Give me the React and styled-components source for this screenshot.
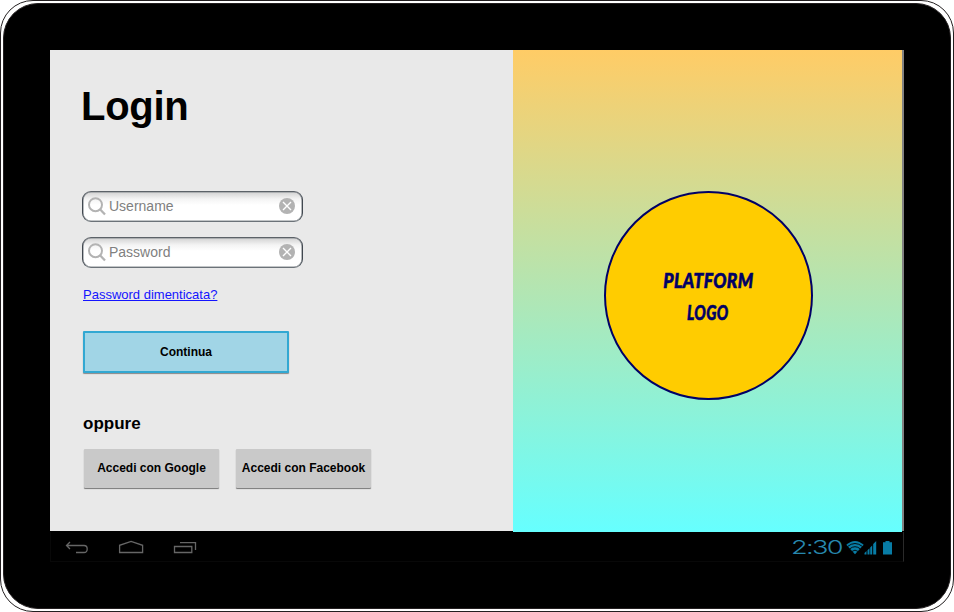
import React from "react";
import styled, { createGlobalStyle } from "styled-components";

const GlobalStyle = createGlobalStyle`
  body { margin: 0; background: #fff; overflow: hidden; font-family: "Liberation Sans", Arial, sans-serif; }
  *, *::before, *::after { box-sizing: border-box; }
`;

const Tablet = styled.div`
  width: 954px;
  height: 612px;
  padding: 2px;
  border: 1px solid #231f20;
  border-radius: 33px;
  background: #fff;
`;

const Bezel = styled.div`
  height: 606px;
  padding: 46px;
  border: 1px solid #231f20;
  border-radius: 35px;
  background: #000;
`;

const Screen = styled.main`
  display: grid;
  grid-template-columns: 463px 389px 2px;
  height: 482px;
`;

const LoginPanel = styled.form`
  height: 481px;
  padding: 33px 0 0 33px;
  background: #e9e9e9;
`;

const Title = styled.h1`
  margin: 0 0 62px -2px;
  font-size: 40px;
  line-height: 46px;
  height: 46px;
  letter-spacing: -0.3px;
`;

const Fields = styled.div`
  display: flex;
  flex-direction: column;
  gap: 15px;
  margin-left: -1px;
`;

const Field = styled.label`
  display: flex;
  align-items: center;
  width: 221px;
  height: 31px;
  padding: 0 7px 1px 5px;
  border: 1px solid;
  border-color: #5c6268 #414850 #6b7278;
  border-radius: 9px;
  background: linear-gradient(#d2d2d2, #f4f4f4 7px, #fff 13px);
  box-shadow: inset 0 0 0 0.6px #868b90;
`;

const FieldText = styled.span`
  flex: 1;
  margin-left: 3px;
  font-size: 14px;
  line-height: 16px;
  color: #808080;
`;

const ForgotLink = styled.a`
  display: block;
  width: max-content;
  margin-top: 19px;
  font-size: 13px;
  line-height: 16px;
  color: #1414ff;
  text-decoration: underline;
`;

const Button = styled.button`
  display: block;
  width: ${(p) => (p.$primary ? 206 : 135)}px;
  height: ${(p) => (p.$primary ? 42 : 39)}px;
  margin: ${(p) => (p.$primary ? "28px 0 0" : "0")};
  padding: ${(p) => (p.$primary ? "0" : "0 0 1px")};
  border: ${(p) => (p.$primary ? "2px solid #32a8d2" : "0")};
  border-radius: 1px;
  background: ${(p) => (p.$primary ? "#a1d5e6" : "#c9c9c9")};
  box-shadow: ${(p) => (p.$primary ? "0 1px 1px #888" : "0 1px 1px #777")};
  font: bold 12px/14px "Liberation Sans", Arial, sans-serif;
  color: #000;
  white-space: nowrap;
`;

const Alternative = styled.h2`
  margin: 41px 0 0;
  font-size: 17px;
  line-height: 20px;
`;

const SocialRow = styled.div`
  display: flex;
  gap: 17px;
  margin: 15px 0 0 1px;
`;

const BrandPanel = styled.section`
  display: flex;
  justify-content: center;
  padding: 141px 0 0 1px;
  height: 482px;
  background: linear-gradient(#ffcc66, #66ffff);
`;

const LogoDisc = styled.div`
  display: flex;
  flex-direction: column;
  align-items: center;
  justify-content: center;
  width: 209px;
  height: 209px;
  border: 2px solid #000066;
  border-radius: 50%;
  background: #ffcc00;
`;

const LogoLine = styled.span`
  display: block;
  font: italic 900 21px/32px Lato, sans-serif;
  letter-spacing: 0.5px;
  color: #000066;
  -webkit-text-stroke: 0.6px #000066;
  transform: scaleX(${(p) => p.$stretch});
`;

const ScreenEdge = styled.div`
  height: 481px;
  background: #828282;
`;

const NavBar = styled.footer`
  display: flex;
  justify-content: space-between;
  width: 854px;
  height: 30px;
  border: 1px solid #080808;
  border-top: 0;
  border-right-color: #2a2a2a;
`;

const NavIcons = styled.nav`
  display: flex;
  gap: 28px;
  padding: 8px 0 0 13px;
`;

const Status = styled.div`
  display: flex;
  padding-right: 9px;
`;

const Clock = styled.time`
  width: 50px;
  margin-right: 5px;
  font: 300 19px/31px Inter, sans-serif;
  letter-spacing: -1.2px;
  color: #2787ad;
  white-space: nowrap;
  transform: scaleX(1.43);
  transform-origin: left center;
`;

const SearchIcon = () => (
  <svg width="18" height="19" viewBox="0 0 18 19" fill="none" stroke="#b3b3b3" strokeWidth="2">
    <circle cx="7.5" cy="7.7" r="6.5" />
    <path d="M12 12.3 17 17.5" strokeWidth="2.3" />
  </svg>
);

const ClearIcon = () => (
  <svg width="16" height="16" viewBox="0 0 16 16">
    <circle cx="8" cy="8" r="8" fill="#b3b3b3" />
    <path d="m4 4 8 8m0-8-8 8" stroke="#fff" strokeWidth="1.4" />
  </svg>
);

const BackIcon = () => (
  <svg width="26" height="16" viewBox="0 0 26 16" fill="none" stroke="#666" strokeWidth="1.3">
    <path d="M6 2 2.5 5.5 6 9M2.5 5.5H20q3.2 0 3.2 3.5T20 12.5h-8" />
  </svg>
);

const HomeIcon = () => (
  <svg width="26" height="16" viewBox="0 0 26 16" fill="none" stroke="#666" strokeWidth="1.3">
    <path d="M1.6 12.5V5.3l11.5-3.8 11.5 3.8v7.2Z" />
  </svg>
);

const RecentIcon = () => (
  <svg width="26" height="16" viewBox="0 0 26 16" fill="none" stroke="#666" strokeWidth="1.3">
    <path d="M2.5 6.5h17.3v6H2.5ZM8 2.7h15.5V10" />
  </svg>
);

const StatusIcons = () => (
  <svg width="48" height="30" viewBox="0 0 48 30" fill="#087ca5">
    <path d="M9 22.3.3 12.8Q9 5.2 17.7 12.8Z" />
    <g fill="none" stroke="#000" strokeWidth=".9">
      <path d="M1.5 14.5q7.5-6 15 0M3.5 17q5.5-4.6 11 0M5.8 19.5q3.2-2.7 6.4 0" />
    </g>
    <path d="M18.5 22.5v-1.4l2-2v3.4ZM21.5 22.5v-4.3l2-1.9v6.2ZM24.2 22.5v-7l2-2v9ZM27.2 22.5V12l3-3v13.5ZM37 22.5V10.3h2.5V9h4v1.3H46v12.2Z" />
  </svg>
);

const SearchField = ({ label }) => (
  <Field>
    <SearchIcon />
    <FieldText>{label}</FieldText>
    <ClearIcon />
  </Field>
);

export default function App() {
  return (
    <>
      <GlobalStyle />
      <Tablet>
        <Bezel>
          <Screen>
            <LoginPanel>
              <Title>Login</Title>
              <Fields>
                <SearchField label="Username" />
                <SearchField label="Password" />
              </Fields>
              <ForgotLink href="#">Password dimenticata?</ForgotLink>
              <Button type="button" $primary>Continua</Button>
              <Alternative>oppure</Alternative>
              <SocialRow>
                <Button type="button">Accedi con Google</Button>
                <Button type="button">Accedi con Facebook</Button>
              </SocialRow>
            </LoginPanel>
            <BrandPanel>
              <LogoDisc>
                <LogoLine $stretch={0.83}>PLATFORM</LogoLine>
                <LogoLine $stretch={0.72}>LOGO</LogoLine>
              </LogoDisc>
            </BrandPanel>
            <ScreenEdge />
          </Screen>
          <NavBar>
            <NavIcons>
              <BackIcon />
              <HomeIcon />
              <RecentIcon />
            </NavIcons>
            <Status>
              <Clock>2:30</Clock>
              <StatusIcons />
            </Status>
          </NavBar>
        </Bezel>
      </Tablet>
    </>
  );
}
